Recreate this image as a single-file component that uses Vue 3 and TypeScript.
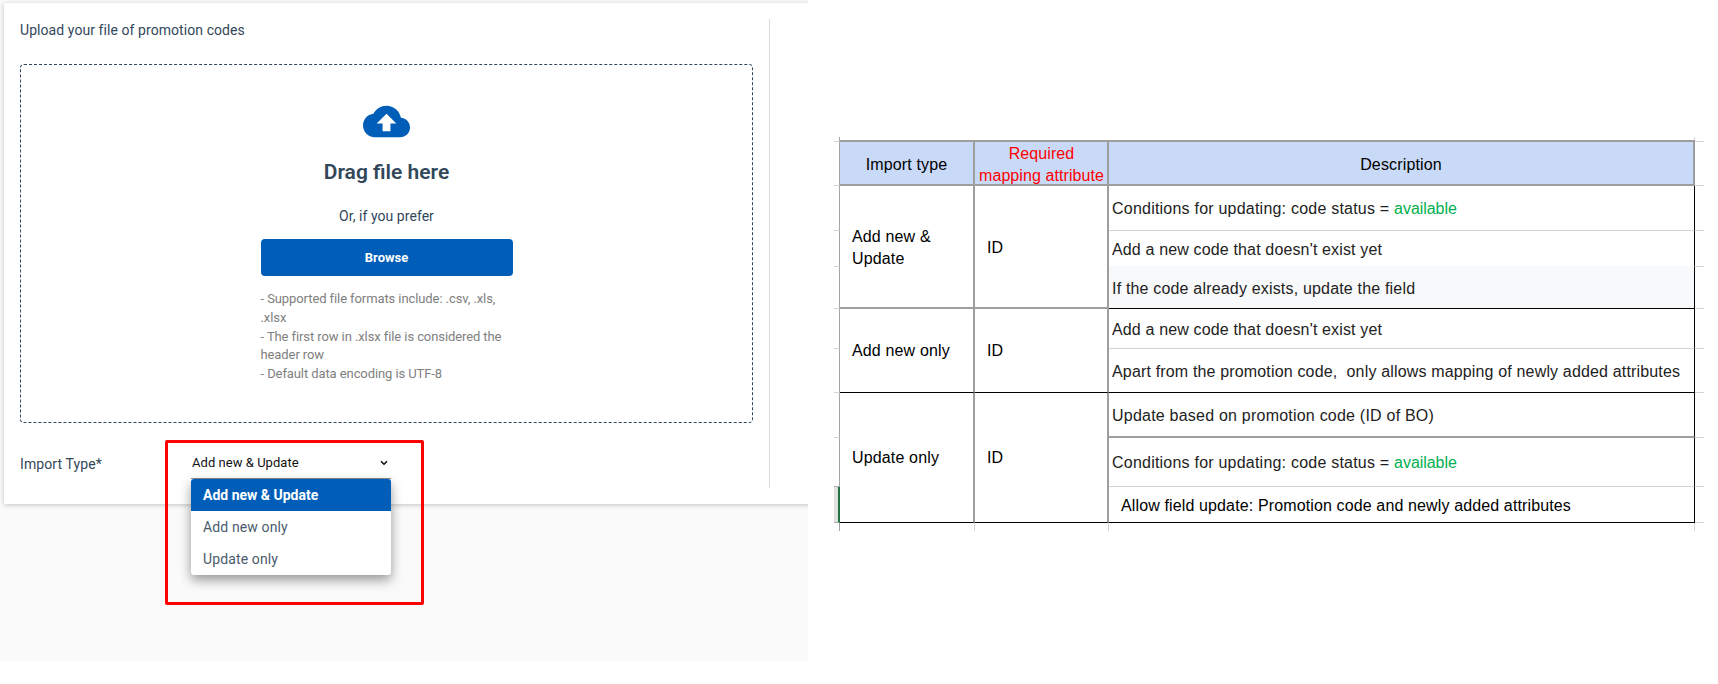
<script setup lang="ts">
interface Line { row: string; text: string; status?: string }

const options: string[] = ['Add new & Update', 'Add new only', 'Update only']
const selected: string = options[0]

const notes: string[] = [
  '- Supported file formats include: .csv, .xls, .xlsx',
  '- The first row in .xlsx file is considered the header row',
  '- Default data encoding is UTF-8',
]

const rows: string[] = ['top', 'head', 'r1', 'r2', 'r3', 'r4', 'r5', 'r6', 'r7', 'r8', 'tail']

const descriptions: Line[] = [
  { row: 'r1', text: 'Conditions for updating: code status = ', status: 'available' },
  { row: 'r2', text: "Add a new code that doesn't exist yet" },
  { row: 'r3', text: 'If the code already exists, update the field' },
  { row: 'r4', text: "Add a new code that doesn't exist yet" },
  { row: 'r5', text: 'Apart from the promotion code,  only allows mapping of newly added attributes' },
  { row: 'r6', text: 'Update based on promotion code (ID of BO)' },
  { row: 'r7', text: 'Conditions for updating: code status = ', status: 'available' },
  { row: 'r8', text: 'Allow field update: Promotion code and newly added attributes' },
]
</script>

<template>
  <main class="page">
    <section class="app">
      <div class="card">
        <div class="form">
          <p class="title"><span>Upload your file of promotion codes</span></p>
          <div class="dropzone">
            <svg class="cloud" viewBox="0 0 24 24" width="47" height="47">
              <path d="M19.35 10.04C18.67 6.59 15.64 4 12 4 9.11 4 6.6 5.64 5.35 8.04 2.34 8.36 0 10.91 0 14c0 3.31 2.69 6 6 6h13c2.76 0 5-2.24 5-5 0-2.64-2.05-4.78-4.65-4.96zM14 13v4h-4v-4H7l5-5 5 5h-3z" />
            </svg>
            <h2 class="drag"><span>Drag file here</span></h2>
            <p class="or"><span>Or, if you prefer</span></p>
            <button class="browse">Browse</button>
            <div class="notes">
              <div v-for="note in notes" :key="note">{{ note }}</div>
            </div>
          </div>
          <div class="field">
            <label class="label">Import Type*</label>
            <div class="select">
              <span class="value">{{ selected }}</span>
              <svg class="chevron" viewBox="0 0 8 6" width="8" height="6"><path d="M1 1.2 L4 4.2 L7 1.2" /></svg>
              <ul class="menu">
                <li v-for="option in options" :key="option" :class="{ active: option === selected }">{{ option }}</li>
              </ul>
              <div class="highlight"></div>
            </div>
          </div>
        </div>
        <div class="divider"></div>
      </div>
    </section>

    <section class="sheet">
      <div v-for="row in rows" :key="'l' + row" class="tick left" :class="row"></div>
      <div class="cell head c1">Import type</div>
      <div class="cell head c2 required">Required<br />mapping attribute</div>
      <div class="cell head c3">Description</div>
      <div class="cell c1 add-update">Add new &amp;<br />Update</div>
      <div class="cell c2 add-update one">ID</div>
      <div class="cell c1 add-only">Add new only</div>
      <div class="cell c2 add-only">ID</div>
      <div class="cell c1 update-only">Update only</div>
      <div class="cell c2 update-only">ID</div>
      <div v-for="line in descriptions" :key="line.row" class="cell c3 desc" :class="line.row"><span>{{ line.text }}<em v-if="line.status">{{ line.status }}</em></span></div>
      <div class="stub c1 tail"></div>
      <div class="stub c2 tail"></div>
      <div class="stub c3 tail"></div>
      <div class="stub c3 top"></div>
      <div v-for="row in rows" :key="'r' + row" class="tick right" :class="row"></div>
    </section>
  </main>
</template>

<style>
body { background: #fff; }
</style>

<style scoped>
* { box-sizing: border-box; }
p, h2, ul { margin: 0; padding: 0; }
.page { display: flex; width: 1718px; height: 684px; overflow: hidden; background: #fff; }

.app { width: 808px; height: 662px; flex: none; padding: 3px 0 0 4px; background: #fafafa; overflow: hidden; font-family: Roboto, sans-serif; color: #33475b; }
.card { display: flex; width: 830px; height: 501px; padding: 16px; background: #fff; box-shadow: 0 1px 5px rgba(0, 0, 0, .22); }
.form { width: 733px; }
.title { height: 45px; font-size: 14px; line-height: 22px; letter-spacing: .07px; }
.dropzone { display: flex; flex-direction: column; align-items: center; width: 733px; height: 359px; padding-top: 33px; border: 1px dashed #33475b; border-radius: 4px; }
.cloud { flex: none; fill: #005eb8; }
.drag { height: 30px; margin-top: 12px; font-size: 21px; font-weight: 600; line-height: 30px; white-space: nowrap; }
.or { height: 20px; margin-top: 19px; font-size: 14px; line-height: 20px; letter-spacing: .05px; white-space: nowrap; }
.browse { flex: none; width: 252px; height: 37px; margin-top: 13px; border: 0; border-radius: 4px; background: #005eb8; color: #fff; font: 700 13px Roboto, sans-serif; }
.notes { width: 252px; margin-top: 14px; font-size: 13px; line-height: 18.75px; letter-spacing: -.09px; color: #808080; }
.field { display: flex; height: 65px; letter-spacing: .1px; }
.label { width: 171px; padding-top: 31px; font-size: 14px; line-height: 20px; }
.select { position: relative; display: flex; justify-content: space-between; width: 200px; height: 56px; padding: 30px 3px 0 1px; border-bottom: 1px solid #8a8a8a; color: #111; font-size: 13px; line-height: 20px; letter-spacing: .04px; }
.chevron { margin-top: 7px; fill: none; stroke: #111; stroke-width: 1.6; }
.menu { position: absolute; z-index: 2; top: 56px; left: 0; width: 200px; border-radius: 3px; background: #fff; box-shadow: 0 5px 12px rgba(0, 0, 0, .4); overflow: hidden; list-style: none; }
.menu li { height: 32px; padding-left: 12px; color: #4a5b6d; font-size: 14px; line-height: 32px; letter-spacing: .13px; }
.menu .active { background: #005eb8; color: #fff; font-weight: 700; letter-spacing: 0; }
.highlight { position: absolute; z-index: 3; left: -26px; top: 17px; width: 259px; height: 165px; border: 3px solid #f00; border-radius: 2px; }
.divider { width: 1px; height: 469px; margin-left: 16px; background: #ddd; }

.sheet { display: grid; grid-template-columns: 6px 135px 134px 586px 9px; grid-template-rows: 5px 44px 45px 36px 42px 40px 44px 45px 49px 36px 8px; height: 394px; margin: 137px 0 0 26px; color: #000; font: 16px/22px "Liberation Sans", Arial, sans-serif; letter-spacing: .15px; }
.cell { border: 0 solid #9e9e9e; white-space: pre; }
.top { grid-row: 1; } .head { grid-row: 2; } .r1 { grid-row: 3; } .r2 { grid-row: 4; } .r3 { grid-row: 5; }
.r4 { grid-row: 6; } .r5 { grid-row: 7; } .r6 { grid-row: 8; } .r7 { grid-row: 9; } .r8 { grid-row: 10; } .tail { grid-row: 11; }
.left { grid-column: 1; border-right: 1px solid #a6a6a6; border-bottom: 1px solid #d4d4d4; }
.right { grid-column: 5; border-bottom: 1px solid #d4d4d4; }
.tick.tail { border-bottom: 0; }
.left.r7 { border-bottom-color: #ababab; }
.left.r8 { background: #e1e1e1; border-right: 2px solid #217346; border-bottom-color: #ababab; }
.c1 { grid-column: 2; } .c2 { grid-column: 3; } .c3 { grid-column: 4; }
.cell.c1, .cell.c2 { border-right-width: 2px; padding-left: 12px; }
.cell.head { padding: 12px 0 0; border-right-width: 2px; border-bottom-width: 2px; background: #c9daf8; text-align: center; box-shadow: 0 -2px #9e9e9e; }
.cell.required { padding: 1px 0 0 1px; color: #f00; letter-spacing: .08px; }
.add-update { grid-row: 3 / 6; padding-top: 40px; border-bottom-width: 2px; }
.add-update.one { padding-top: 51px; }
.add-only { grid-row: 6 / 8; padding-top: 31px; border-bottom: 1px solid #000; }
.update-only { grid-row: 8 / 11; padding-top: 54px; border-bottom: 1px solid #000; }
.desc { padding: 12px 0 0 3px; border-right: 1px solid #000; border-bottom: 1px solid #d4d4d4; color: #222; }
.desc em { color: #00b050; font-style: normal; letter-spacing: -.05px; }
.desc.r1, .desc.r7 { letter-spacing: .22px; }
.desc.r2 { padding-top: 8px; border-bottom-color: #f8f9fa; }
.desc.r3 { padding-top: 11px; background: #f8f9fa; border-bottom-color: #000; letter-spacing: .18px; }
.desc.r4 { padding-top: 10px; }
.desc.r5 { border-bottom-color: #000; letter-spacing: .16px; }
.desc.r6 { border-bottom: 2px solid #9e9e9e; letter-spacing: .22px; }
.desc.r7 { padding-top: 14px; }
.desc.r8 { padding: 8px 0 0 12px; border-bottom-color: #000; color: #000; letter-spacing: .13px; }
.stub { border-right: 1px solid #d4d4d4; }
.stub.top { height: 3px; }
</style>
